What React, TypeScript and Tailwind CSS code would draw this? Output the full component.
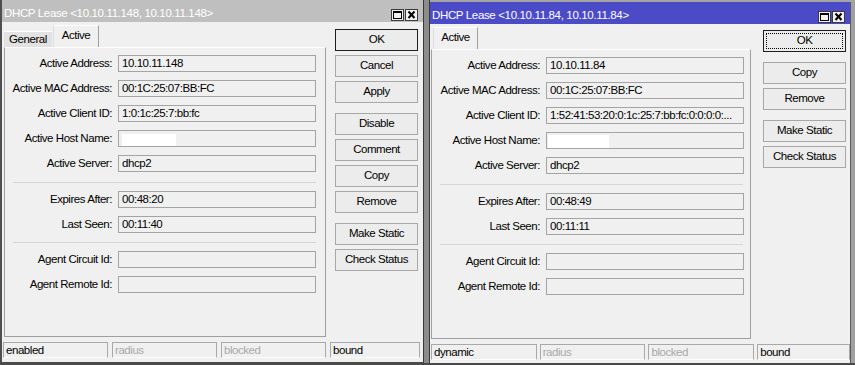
import React from "react";

function TitleButtons() {
  return (
    <div className="flex gap-[1px] mt-[2px]">
      <div className="w-[13px] h-[12px] border border-[#3a3a3a] bg-[#f2f2f2] flex items-center justify-center">
        <svg width="11" height="10" viewBox="0 0 11 10">
          <rect x="1.5" y="1.5" width="8" height="7" fill="none" stroke="#000" strokeWidth="1" />
          <line x1="1" y1="2" x2="10" y2="2" stroke="#000" strokeWidth="2" />
        </svg>
      </div>
      <div className="w-[13px] h-[12px] border border-[#3a3a3a] bg-[#f2f2f2] flex items-center justify-center">
        <svg width="11" height="10" viewBox="0 0 11 10">
          <line x1="2.5" y1="1.5" x2="8.5" y2="8" stroke="#000" strokeWidth="2" />
          <line x1="8.5" y1="1.5" x2="2.5" y2="8" stroke="#000" strokeWidth="2" />
        </svg>
      </div>
    </div>
  );
}

type FieldProps = {
  label: string;
  value?: string;
  redact?: "left" | "right";
  wide?: boolean;
};

function Field({ label, value, redact, wide }: FieldProps) {
  return (
    <div className="flex items-center h-[17px]">
      <div
        className={
          (wide ? "w-[114px]" : "w-[113px]") +
          " text-right pr-[6px] leading-[17px] whitespace-nowrap"
        }
      >
        {label}
      </div>
      <div className="w-[198px] h-[17px] border border-[#a4a4a4] bg-[#f0f0f0] pl-[3px] leading-[15px] whitespace-nowrap overflow-hidden flex items-end">
        {redact === "left" && <div className="w-[54px] h-[12px] bg-white" />}
        {redact === "right" && <div className="w-[61px] h-[13px] bg-white ml-[-2px]" />}
        {!redact && <span className="self-center">{value}</span>}
      </div>
    </div>
  );
}

function Sep({ first }: { first?: boolean }) {
  return (
    <div
      className={
        (first ? "mt-[10px]" : "mt-[9px]") +
        " mb-[8px] ml-[8px] w-[303px] h-px bg-[#d6d6d6]"
      }
    />
  );
}

function Btn({ label, def, focus }: { label: string; def?: boolean; focus?: boolean }) {
  if (def) {
    return (
      <div className="w-[83px] h-[22px] border border-[#1e1e1e] bg-[#ececec] flex p-[2px]">
        <div
          className={
            "flex-1 flex items-center justify-center " +
            (focus ? "border border-dotted border-black" : "border border-transparent")
          }
        >
          {label}
        </div>
      </div>
    );
  }
  return (
    <div className="w-[83px] h-[22px] border border-[#a8a8a8] bg-[#ececec] flex items-center justify-center">
      {label}
    </div>
  );
}

function Cell({ text, dim, w }: { text: string; dim?: boolean; w: string }) {
  return (
    <div
      className={
        w +
        " h-[16px] border border-[#a9a9a9] border-b-white pl-[2px] leading-[14px] whitespace-nowrap " +
        (dim ? "text-[#a9a9a9]" : "text-black")
      }
    >
      {text}
    </div>
  );
}

type PanelProps = {
  wide?: boolean;
  address: string;
  clientId: string;
  expires: string;
  last: string;
  redact: "left" | "right";
};

function Panel({ wide, address, clientId, expires, last, redact }: PanelProps) {
  return (
    <div
      className={
        (wide ? "w-[322px]" : "w-[320px]") +
        " h-[290px] border border-[#a0a0a0] border-t-white flex flex-col pt-[7px]"
      }
    >
      <div className="flex flex-col gap-[8px]">
        <Field wide={!wide} label="Active Address:" value={address} />
        <Field wide={!wide} label="Active MAC Address:" value="00:1C:25:07:BB:FC" />
        <Field wide={!wide} label="Active Client ID:" value={clientId} />
        <Field wide={!wide} label="Active Host Name:" redact={redact} />
        <Field wide={!wide} label="Active Server:" value="dhcp2" />
      </div>
      <Sep first />
      <div className="flex flex-col gap-[8px]">
        <Field wide={!wide} label="Expires After:" value={expires} />
        <Field wide={!wide} label="Last Seen:" value={last} />
      </div>
      <Sep />
      <div className="flex flex-col gap-[8px]">
        <Field wide={!wide} label="Agent Circuit Id:" value="" />
        <Field wide={!wide} label="Agent Remote Id:" value="" />
      </div>
    </div>
  );
}

export default function App() {
  return (
    <div className="w-[855px] h-[365px] flex bg-[#4a4a4a] overflow-hidden font-['Liberation_Sans',Arial,sans-serif] text-[11.5px] tracking-[-0.45px] text-black">
      {/* Left window */}
      <div className="w-[423px] h-[362px] border-l-2 border-[#4f4f4f] flex flex-col bg-[#f0f0f0]">
        <div className="h-[22px] bg-[#bfbfbf] text-white flex items-center pt-[5px] pl-[2px] pr-[5px] shrink-0">
          <div className="flex-1 whitespace-nowrap leading-[13px] tracking-[-0.35px]">DHCP Lease &lt;10.10.11.148, 10.10.11.148&gt;</div>
          <TitleButtons />
        </div>
        <div className="flex">
          <div className="ml-[2px] flex flex-col">
            <div className="h-[25px] flex items-end">
              <div className="w-[48px] h-[16px] bg-[#e2e2e2] border-t border-white flex justify-center leading-[14px] text-black">
                General
              </div>
              <div className="ml-[1px] w-[46px] h-[22px] border-t border-l border-r border-t-white border-l-[#dcdcdc] border-r-[#a0a0a0] flex justify-center pt-[3px] leading-[13px]">
                Active
              </div>
            </div>
            <Panel
              wide
              address="10.10.11.148"
              clientId="1:0:1c:25:7:bb:fc"
              expires="00:48:20"
              last="00:11:40"
              redact="left"
            />
          </div>
          <div className="ml-[9px] mt-[7px] flex flex-col">
            <div className="flex flex-col gap-[4px]">
              <Btn label="OK" def />
              <Btn label="Cancel" />
              <Btn label="Apply" />
            </div>
            <div className="flex flex-col gap-[4px] mt-[10px]">
              <Btn label="Disable" />
              <Btn label="Comment" />
              <Btn label="Copy" />
              <Btn label="Remove" />
            </div>
            <div className="flex flex-col gap-[4px] mt-[10px]">
              <Btn label="Make Static" />
              <Btn label="Check Status" />
            </div>
          </div>
        </div>
        <div className="flex gap-[4px] ml-[1px] mt-[5px]">
          <Cell w="w-[105px]" text="enabled" />
          <Cell w="w-[105px]" text="radius" dim />
          <Cell w="w-[105px]" text="blocked" dim />
          <Cell w="w-[90px]" text="bound" />
        </div>
      </div>

      {/* Separator between windows */}
      <div className="w-[7px] h-[363px] border-l border-r border-[#383838] bg-[#8c8c8c]" />

      {/* Right window */}
      <div className="flex-1 flex flex-col h-[363px] bg-[#9a9a9a]">
        <div className="h-[2px] shrink-0 bg-[#a4a4a4]" />
        <div className="flex-1 flex">
          <div className="w-[420px] flex flex-col bg-[#f0f0f0]">
            <div className="h-[22px] bg-[#4b4bc8] text-white flex items-center pt-[5px] pl-[2px] pr-[5px] shrink-0">
              <div className="flex-1 whitespace-nowrap leading-[13px] tracking-[-0.35px]">DHCP Lease &lt;10.10.11.84, 10.10.11.84&gt;</div>
              <TitleButtons />
            </div>
            <div className="flex">
              <div className="ml-[1px] flex flex-col">
                <div className="h-[25px] flex items-end">
                  <div className="ml-[2px] w-[45px] h-[22px] border-t border-l border-r border-t-white border-l-[#dcdcdc] border-r-[#a0a0a0] flex justify-center pt-[3px] leading-[13px]">
                    Active
                  </div>
                </div>
                <Panel
                  address="10.10.11.84"
                  clientId="1:52:41:53:20:0:1c:25:7:bb:fc:0:0:0:0:..."
                  expires="00:48:49"
                  last="00:11:11"
                  redact="right"
                />
              </div>
              <div className="ml-[12px] mt-[6px] flex flex-col">
                <Btn label="OK" def focus />
                <div className="flex flex-col gap-[4px] mt-[10px]">
                  <Btn label="Copy" />
                  <Btn label="Remove" />
                </div>
                <div className="flex flex-col gap-[4px] mt-[10px]">
                  <Btn label="Make Static" />
                  <Btn label="Check Status" />
                </div>
              </div>
            </div>
            <div className="flex gap-[3px] ml-[1px] mt-[5px]">
              <Cell w="w-[106px]" text="dynamic" />
              <Cell w="w-[106px]" text="radius" dim />
              <Cell w="w-[106px]" text="blocked" dim />
              <Cell w="w-[93px]" text="bound" />
            </div>
          </div>
          <div className="w-[5px] border-l border-[#5a5a5a] bg-[#a0a0a0]" />
        </div>
      </div>
    </div>
  );
}
